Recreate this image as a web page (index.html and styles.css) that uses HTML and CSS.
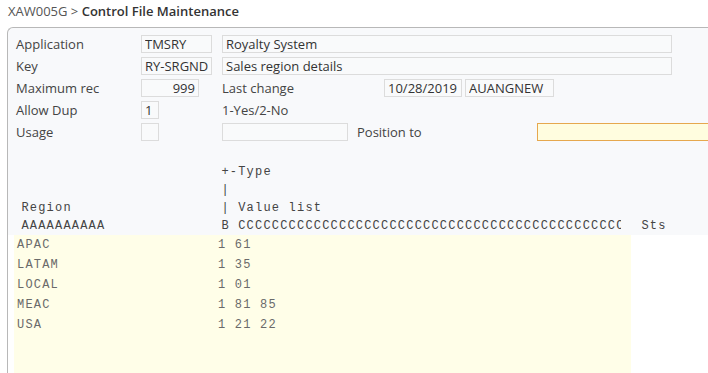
FILE: index.html
```html
<!DOCTYPE html>
<html lang="en">
<head>
  <meta charset="UTF-8">
  <title>Control File Maintenance</title>
  <link rel="stylesheet" href="styles.css">
</head>
<body>
  <div class="page">
    <div class="crumb">
      <span class="prog">XAW005G &gt;</span>
      <span class="screen">Control File Maintenance</span>
    </div>

    <div class="panel">
      <div class="form">
        <div class="row">
          <label>Application</label>
          <input class="fld w-code" value="TMSRY" readonly>
          <input class="fld w-desc" value="Royalty System" readonly>
        </div>
        <div class="row">
          <label>Key</label>
          <input class="fld w-code" value="RY-SRGND" readonly>
          <input class="fld w-desc" value="Sales region details" readonly>
        </div>
        <div class="row">
          <label>Maximum rec</label>
          <input class="fld w-num num" value="999" readonly>
          <span class="text w-lastchg">Last change</span>
          <input class="fld w-date" value="10/28/2019" readonly>
          <input class="fld w-user" value="AUANGNEW" readonly>
        </div>
        <div class="row">
          <label>Allow Dup</label>
          <input class="fld w-one" value="1" readonly>
          <span class="text">1-Yes/2-No</span>
        </div>
        <div class="row">
          <label>Usage</label>
          <input class="fld w-one" value="" readonly>
          <input class="fld w-usage" value="" readonly>
          <span class="text w-posto">Position to</span>
          <input class="fld w-pos pos" value="">
        </div>
      </div>

      <div class="subfile">
        <div class="sf-head">
          <div class="hline"><span class="c1"></span><span class="c2"> +-Type</span></div>
          <div class="hline"><span class="c1"></span><span class="c2"> |</span></div>
          <div class="hline"><span class="c1"> Region</span><span class="c2"> | Value list</span></div>
          <div class="hline"><span class="c1"> AAAAAAAAAA</span><span class="c2 clip"> B CCCCCCCCCCCCCCCCCCCCCCCCCCCCCCCCCCCCCCCCCCCCCC</span><span class="c3"> Sts</span></div>
        </div>
        <div class="sf-body">
          <div class="sf-row"><span class="d1">APAC</span><span class="d2">1 61</span></div>
          <div class="sf-row"><span class="d1">LATAM</span><span class="d2">1 35</span></div>
          <div class="sf-row"><span class="d1">LOCAL</span><span class="d2">1 01</span></div>
          <div class="sf-row"><span class="d1">MEAC</span><span class="d2">1 81 85</span></div>
          <div class="sf-row"><span class="d1">USA</span><span class="d2">1 21 22</span></div>
          <div class="sf-row filler"><span class="d1"></span><span class="d2"></span></div>
        </div>
      </div>
    </div>
  </div>
</body>
</html>
```

FILE: styles.css
```css
* {
  box-sizing: border-box;
  margin: 0;
  padding: 0;
}

html, body {
  background: #fff;
  overflow: hidden;
}

body {
  font-family: 'Open Sans', 'Liberation Sans', sans-serif;
  font-size: 13px;
  color: #444;
}

.page {
  width: 800px;
  padding-left: 7px;
}

.crumb {
  height: 27px;
  padding: 2px 0 0 1px;
  line-height: 18px;
  font-size: 13px;
}

.prog {
  color: #555;
}

.screen {
  color: #333;
  font-weight: 600;
}

.panel {
  background: #f8f9fb;
  border: 1px solid #b8b8b8;
  border-right: none;
  border-radius: 6px 0 0 0;
  min-height: 400px;
}

.form {
  padding: 5px 0 0 8px;
}

.row {
  display: flex;
  align-items: center;
  height: 22px;
}

.row label {
  width: 125px;
  color: #444;
}

.fld {
  height: 18px;
  border: 1px solid #dcdcdc;
  background: #f9fafb;
  font-family: 'Open Sans', 'Liberation Sans', sans-serif;
  font-size: 13px;
  color: #333;
  padding: 0 3px;
  outline: none;
}

.num {
  text-align: right;
}

.text {
  color: #444;
}

.w-code { width: 71px; margin-right: 10px; }
.w-desc { width: 450px; }
.w-num { width: 58px; margin-right: 23px; }
.w-lastchg { width: 162px; }
.w-date { width: 78px; margin-right: 3px; }
.w-user { width: 89px; }
.w-one { width: 18px; margin-right: 63px; }
.w-usage { width: 126px; margin-right: 9px; }
.w-posto { width: 180px; }
.w-pos { width: 220px; }

.pos {
  background: #fffddf;
  border-color: #e6a84e;
}

.subfile {
  margin-top: 20px;
  font-family: 'Liberation Mono', 'DejaVu Sans Mono', monospace;
  font-size: 12px;
  letter-spacing: 1.2px;
}

.sf-head {
  padding-left: 5px;
  color: #444;
}

.hline {
  display: flex;
  height: 18px;
  line-height: 18px;
  white-space: pre;
}

.c1 {
  width: 200px;
}

.c2 {
  width: 420px;
}

.clip {
  width: 408px;
  margin-right: 12px;
  overflow: hidden;
}

.sf-body {
  background: #fff;
  padding-left: 6px;
  min-height: 200px;
}

.sf-row {
  display: flex;
  width: 617px;
  height: 20px;
  line-height: 20px;
  background: #fffee8;
  color: #6a6a6a;
}

.sf-row.filler {
  height: 140px;
}

.d1 {
  width: 200px;
  padding-left: 3px;
}

.d2 {
  padding-left: 4px;
}
```
